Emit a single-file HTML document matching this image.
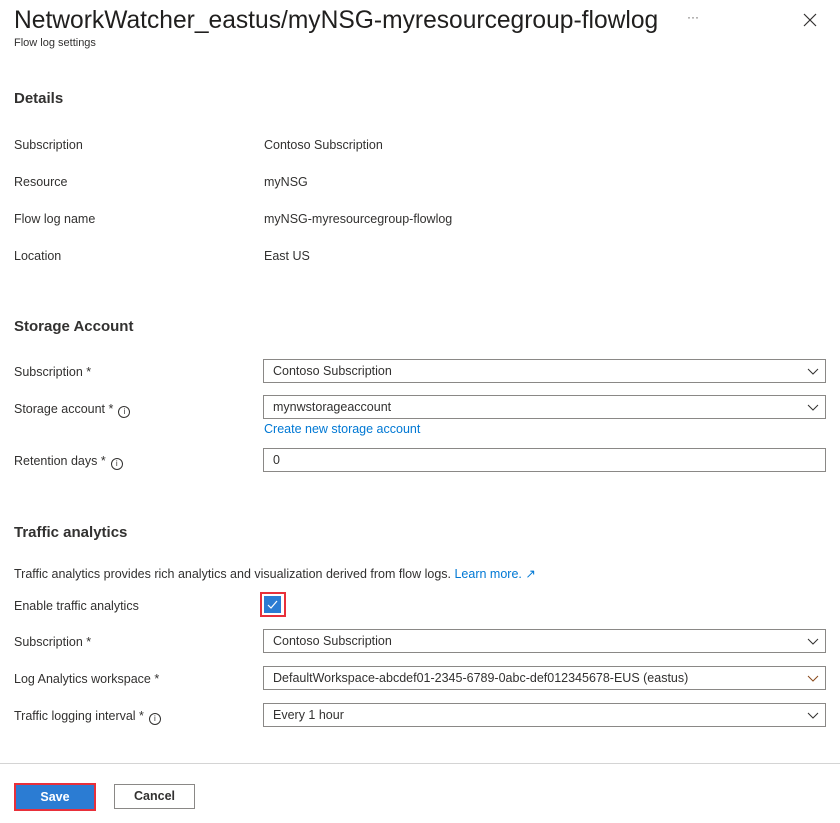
<!DOCTYPE html>
<html><head><meta charset="utf-8"><style>
body{margin:0;width:840px;height:823px;background:#fff;font-family:"Liberation Sans",sans-serif;color:#323130;position:relative;overflow:hidden}
.a{position:absolute;white-space:nowrap}
.t{font-size:12.5px;line-height:16px}
.h{font-size:15px;font-weight:bold;line-height:18px}
.in{position:absolute;left:263px;width:561px;height:22px;border:1px solid #8a8886;font-size:12.5px;line-height:22px;box-sizing:content-box}
.in span{position:absolute;left:9px;top:0}
.in svg{position:absolute;right:6px;top:8px}
.i{display:inline-block;width:10px;height:10px;border:1px solid #323130;border-radius:50%;font-size:8px;line-height:10px;text-align:center;margin-left:5px;vertical-align:-1px}
</style></head><body>
<div class="a" style="left:14px;top:5px;font-size:24.6px;line-height:32px;color:#201f1e">NetworkWatcher_eastus/myNSG-myresourcegroup-flowlog</div>
<div class="a" style="left:14px;top:37px;font-size:11px;color:#323130">Flow log settings</div>
<div class="a" style="left:687px;top:10px;font-size:12px;color:#605e5c">···</div>
<svg class="a" style="left:803px;top:13px" width="14" height="14"><path d="M1 1L13 13M13 1L1 13" stroke="#323130" stroke-width="1.2"/></svg>

<div class="a h" style="left:14px;top:90px">Details</div>
<div class="a t" style="left:14px;top:137px">Subscription</div><div class="a t" style="left:264px;top:137px">Contoso Subscription</div>
<div class="a t" style="left:14px;top:174px">Resource</div><div class="a t" style="left:264px;top:174px">myNSG</div>
<div class="a t" style="left:14px;top:211px">Flow log name</div><div class="a t" style="left:264px;top:211px">myNSG-myresourcegroup-flowlog</div>
<div class="a t" style="left:14px;top:248px">Location</div><div class="a t" style="left:264px;top:248px">East US</div>

<div class="a h" style="left:14px;top:318px">Storage Account</div>
<div class="a t" style="left:14px;top:364px">Subscription *</div>
<div class="in" style="top:359px"><span>Contoso Subscription</span><svg width="12" height="8"><path d="M1 1L6 6L11 1" stroke="#323130" fill="none"/></svg></div>
<div class="a t" style="left:14px;top:401px">Storage account *<span class="i">i</span></div>
<div class="in" style="top:395px"><span>mynwstorageaccount</span><svg width="12" height="8"><path d="M1 1L6 6L11 1" stroke="#323130" fill="none"/></svg></div>
<div class="a t" style="left:264px;top:421px;color:#0078d4">Create new storage account</div>
<div class="a t" style="left:14px;top:453px">Retention days *<span class="i">i</span></div>
<div class="in" style="top:448px"><span>0</span></div>

<div class="a h" style="left:14px;top:524px">Traffic analytics</div>
<div class="a t" style="left:14px;top:566px">Traffic analytics provides rich analytics and visualization derived from flow logs. <span style="color:#0078d4">Learn more. ↗</span></div>
<div class="a t" style="left:14px;top:598px">Enable traffic analytics</div>
<div class="a" style="left:260px;top:592px;width:22px;height:21px;border:2px solid #e8303a;background:#fff"></div>
<div class="a" style="left:264px;top:596px;width:17px;height:17px;background:#2b7cd3"><svg width="17" height="17"><path d="M4 9L7 12L13 5" stroke="#fff" stroke-width="1.2" fill="none"/></svg></div>
<div class="a t" style="left:14px;top:634px">Subscription *</div>
<div class="in" style="top:629px"><span>Contoso Subscription</span><svg width="12" height="8"><path d="M1 1L6 6L11 1" stroke="#323130" fill="none"/></svg></div>
<div class="a t" style="left:14px;top:671px">Log Analytics workspace *</div>
<div class="in" style="top:666px"><span>DefaultWorkspace-abcdef01-2345-6789-0abc-def012345678-EUS (eastus)</span><svg width="12" height="8"><path d="M1 1L6 6L11 1" stroke="#8a4a1c" fill="none"/></svg></div>
<div class="a t" style="left:14px;top:708px">Traffic logging interval *<span class="i">i</span></div>
<div class="in" style="top:703px"><span>Every 1 hour</span><svg width="12" height="8"><path d="M1 1L6 6L11 1" stroke="#323130" fill="none"/></svg></div>

<div class="a" style="left:0;top:763px;width:840px;height:1px;background:#d4d4d4"></div>
<div class="a" style="left:14px;top:783px;width:78px;height:24px;border:2px solid #e8303a;background:#2b7cd3;color:#fff;font-weight:bold;font-size:12.5px;line-height:24px;text-align:center">Save</div>
<div class="a" style="left:114px;top:784px;width:79px;height:23px;border:1px solid #8a8886;font-weight:bold;font-size:12.5px;line-height:23px;text-align:center">Cancel</div>
</body></html>
